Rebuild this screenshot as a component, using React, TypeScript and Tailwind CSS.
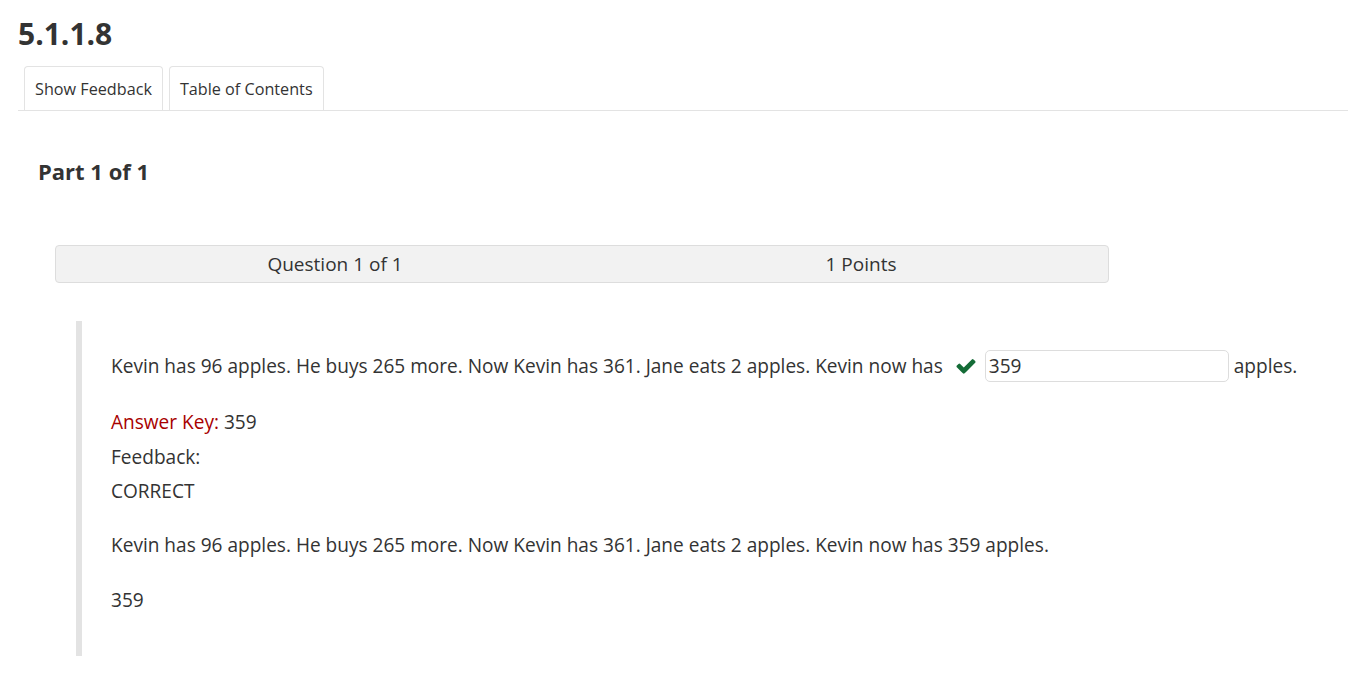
import React from "react";

export default function App() {
  return (
    <div className="w-[1348px] h-[698px] bg-white text-[#333333]" style={{ fontFamily: '"Open Sans", sans-serif' }}>
      <div className="pl-[18px] pt-[13px]">
        <h1 className="text-[30px] font-bold leading-[42px] text-[#333333]">5.1.1.8</h1>
        <div className="mt-[11px] flex gap-[6px] border-b border-[#e3e3e3] pl-[6px]">
          <div className="h-[44px] px-[10px] pt-[2px] flex items-center border border-b-0 border-[#e3e3e3] rounded-t-[4px] text-[16.2px]">Show Feedback</div>
          <div className="h-[44px] px-[10px] pt-[2px] flex items-center border border-b-0 border-[#e3e3e3] rounded-t-[4px] text-[16.2px]">Table of Contents</div>
        </div>
      </div>
      <div className="pl-[38px] pt-[46px] text-[22px] font-bold leading-[28px]">Part 1 of 1</div>
      <div className="ml-[55px] mt-[60px] w-[1054px] h-[38px] bg-[#f2f2f2] border border-[#dddddd] rounded-[4px] flex items-center pl-[16px] text-[19px]">
        <div className="w-[526px] flex-none text-center">Question 1 of 1</div>
        <div className="w-[526px] flex-none text-center">1 Points</div>
      </div>
      <div className="ml-[76px] mt-[38px] h-[335px] border-l-[6px] border-[#e3e3e3] pl-[29px] pt-[27px] text-[19.07px]">
        <div className="flex items-center h-[36px]">
          <span>Kevin has 96 apples. He buys 265 more. Now Kevin has 361. Jane eats 2 apples. Kevin now has</span>
          <svg className="ml-[12px] mr-[8px]" width="22" height="22" viewBox="0 0 1792 1792">
            <path fill="#146c37" d="M1671 566q0 40-28 68l-724 724-136 136q-28 28-68 28t-68-28l-136-136-362-362q-28-28-28-68t28-68l136-136q28-28 68-28t68 28l294 295 656-657q28-28 68-28t68 28l136 136q28 28 28 68z" />
          </svg>
          <div className="w-[244px] h-[32px] border border-[#dddddd] rounded-[5px] flex items-center px-[3px]">359</div>
          <span className="ml-[5px]">apples.</span>
        </div>
        <div className="mt-[21px] leading-[34px]">
          <span className="text-[#a80000]">Answer Key:</span> 359
        </div>
        <div className="mt-[1px] leading-[34px]">Feedback:</div>
        <div className="leading-[34px]">CORRECT</div>
        <div className="mt-[20px] leading-[34px]">Kevin has 96 apples. He buys 265 more. Now Kevin has 361. Jane eats 2 apples. Kevin now has 359 apples.</div>
        <div className="mt-[21px] leading-[34px]">359</div>
      </div>
    </div>
  );
}
